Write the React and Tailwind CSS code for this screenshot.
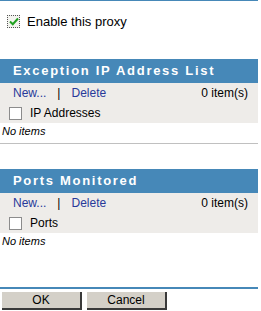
import React from 'react';

function Section({ title, column }) {
    return (
        <div>
            <div className="h-[24px] bg-[#4688b8] flex items-center pl-[13px] text-white font-bold text-[13px] tracking-[1.7px]">
                {title}
            </div>
            <div className="bg-[#eeece9]">
                <div className="h-[20px] flex items-center pl-[13px] pr-[10px] text-[12px] text-[#27399a]">
                    <span>New...</span>
                    <span className="ml-[11px] text-black">|</span>
                    <span className="ml-[11px]">Delete</span>
                    <span className="ml-auto text-black">0 item(s)</span>
                </div>
                <div className="h-[20px] flex items-center pl-[9px] text-[12px] text-black">
                    <span className="w-[13px] h-[13px] bg-white border border-[#8c8c8c]" />
                    <span className="ml-[8px]">{column}</span>
                </div>
            </div>
            <div className="h-[17px] flex items-center pl-[2px] text-[11px] italic text-black">No items</div>
        </div>
    );
}

export default function App() {
    return (
        <div className="w-[261px] h-[311px] bg-white overflow-hidden flex flex-col" style={{ fontFamily: '"Liberation Sans", Arial, sans-serif' }}>
            <div className="w-[258px]">
                <div className="h-[1px] bg-[#4688b8]" />
                <div className="h-[58px] flex items-start pt-[14px] pl-[7px]">
                    <span className="w-[13px] h-[13px] border border-dotted border-[#555] bg-[#f4f4f0] flex items-center justify-center">
                        <svg width="10" height="9" viewBox="0 0 10 9">
                            <path d="M1 4.5 L3.8 7.2 L9 1.5" stroke="#21a121" strokeWidth="2" fill="none" />
                        </svg>
                    </span>
                    <span className="ml-[7px] text-[13px] text-black leading-[13px]">Enable this proxy</span>
                </div>
                <Section title="Exception IP Address List" column="IP Addresses" />
                <div className="h-[3px]" />
                <div className="h-[1px] bg-[#c0c0c0]" />
                <div className="h-[25px]" />
                <Section title="Ports Monitored" column="Ports" />
                <div className="h-[37px]" />
                <div className="h-[2px] bg-[#4688b8]" />
                <div className="flex gap-[5px] pt-[3px] pl-[2px]">
                    <button className="w-[80px] h-[18px] bg-[#d4d0c8] border-r-2 border-b-2 border-[#3a3a3a] text-[12px] text-black flex items-center justify-center">OK</button>
                    <button className="w-[80px] h-[18px] bg-[#d4d0c8] border-r-2 border-b-2 border-[#3a3a3a] text-[12px] text-black flex items-center justify-center">Cancel</button>
                </div>
            </div>
        </div>
    );
}
